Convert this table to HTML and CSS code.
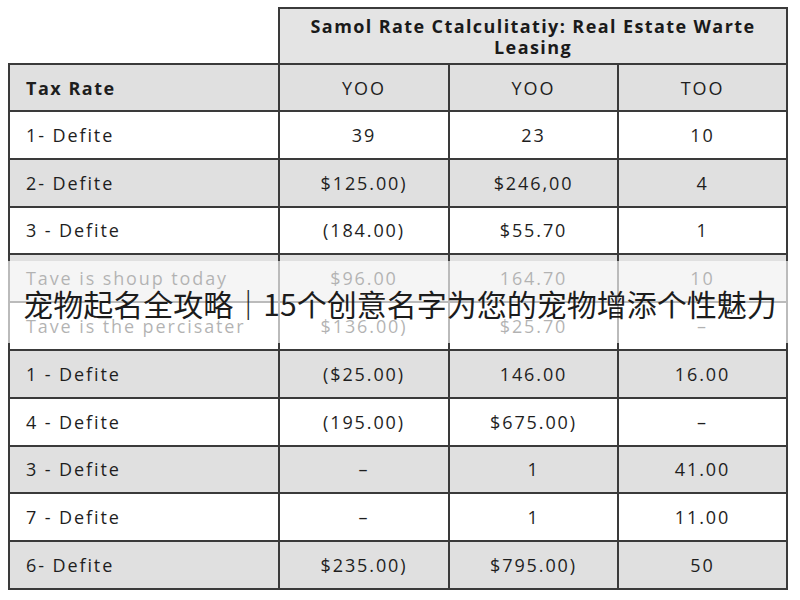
FILE: index.html
```html
<!DOCTYPE html>
<html lang="zh">
<head>
<meta charset="utf-8">
<title>宠物起名全攻略</title>
<link rel="stylesheet" href="styles.css">
</head>
<body>
<div class="page">
  <table class="rates">
    <colgroup>
      <col class="c1"><col class="c2"><col class="c3"><col class="c4">
    </colgroup>
    <thead>
      <tr class="title-row">
        <th class="blank"></th>
        <th class="title" colspan="3">Samol Rate Ctalculitatiy: Real Estate Warte<br>Leasing</th>
      </tr>
      <tr class="head-row gray">
        <th class="label">Tax Rate</th>
        <th>YOO</th>
        <th>YOO</th>
        <th>TOO</th>
      </tr>
    </thead>
    <tbody>
      <tr><td class="label">1- Defite</td><td>39</td><td>23</td><td>10</td></tr>
      <tr class="gray"><td class="label">2- Defite</td><td>$125.00)</td><td>$246,00</td><td>4</td></tr>
      <tr><td class="label">3 - Defite</td><td>(184.00)</td><td>$55.70</td><td>1</td></tr>
      <tr class="gray"><td class="label">Tave is shoup today</td><td>$96.00</td><td>164.70</td><td>10</td></tr>
      <tr><td class="label">Tave is the percisater</td><td>$136.00)</td><td>$25.70</td><td>–</td></tr>
      <tr class="gray"><td class="label">1 - Defite</td><td>($25.00)</td><td>146.00</td><td>16.00</td></tr>
      <tr><td class="label">4 - Defite</td><td>(195.00)</td><td>$675.00)</td><td>–</td></tr>
      <tr class="gray"><td class="label">3 - Defite</td><td>–</td><td>1</td><td>41.00</td></tr>
      <tr><td class="label">7 - Defite</td><td>–</td><td>1</td><td>11.00</td></tr>
      <tr class="gray"><td class="label">6- Defite</td><td>$235.00)</td><td>$795.00)</td><td>50</td></tr>
    </tbody>
  </table>
  <div class="banner">
    <h1 class="banner-text">宠物起名全攻略｜15个创意名字为您的宠物增添个性魅力</h1>
  </div>
</div>
</body>
</html>
```

FILE: styles.css
```css
html, body {
  margin: 0;
  padding: 0;
  background: #ffffff;
}

.page {
  position: relative;
  width: 800px;
  height: 600px;
  padding: 7px 0 0 8px;
  box-sizing: border-box;
  overflow: hidden;
}

.rates {
  border-collapse: collapse;
  table-layout: fixed;
  width: 778px;
  font-family: "Open Sans", "Liberation Sans", sans-serif;
  font-size: 18px;
  letter-spacing: 1.9px;
  color: #1e1e1e;
}

.c1 { width: 270px; }
.c2 { width: 170px; }
.c3 { width: 169px; }
.c4 { width: 169px; }

.rates th,
.rates td {
  border: 2px solid #3a3a3a;
  text-align: center;
  padding: 0;
  height: 45.8px;
  font-weight: normal;
}

.rates .blank {
  border: none;
  background: transparent;
}

.rates .title {
  background: #e4e4e4;
  font-weight: bold;
  font-size: 18px;
  letter-spacing: 1.4px;
  line-height: 21px;
  height: 53px;
  padding-top: 1px;
  color: #1a1a1a;
}

.rates .head-row th {
  height: 45px;
}

.rates .head-row .label {
  font-weight: bold;
  letter-spacing: 1.5px;
}

.rates .label {
  text-align: left;
  padding-left: 16px;
}

.gray td,
.gray th {
  background: #e0e0e0;
}

.banner {
  position: absolute;
  left: 0;
  right: 0;
  top: 261px;
  height: 82px;
  background: rgba(255, 255, 255, 0.66);
  display: flex;
  align-items: center;
  justify-content: center;
}

.banner-text {
  margin: 0;
  font-family: "Noto Sans CJK SC", "Noto Sans", sans-serif;
  font-weight: normal;
  font-size: 30px;
  line-height: 1;
  color: #1c1c1c;
  white-space: nowrap;
  padding-top: 2px;
}
```
